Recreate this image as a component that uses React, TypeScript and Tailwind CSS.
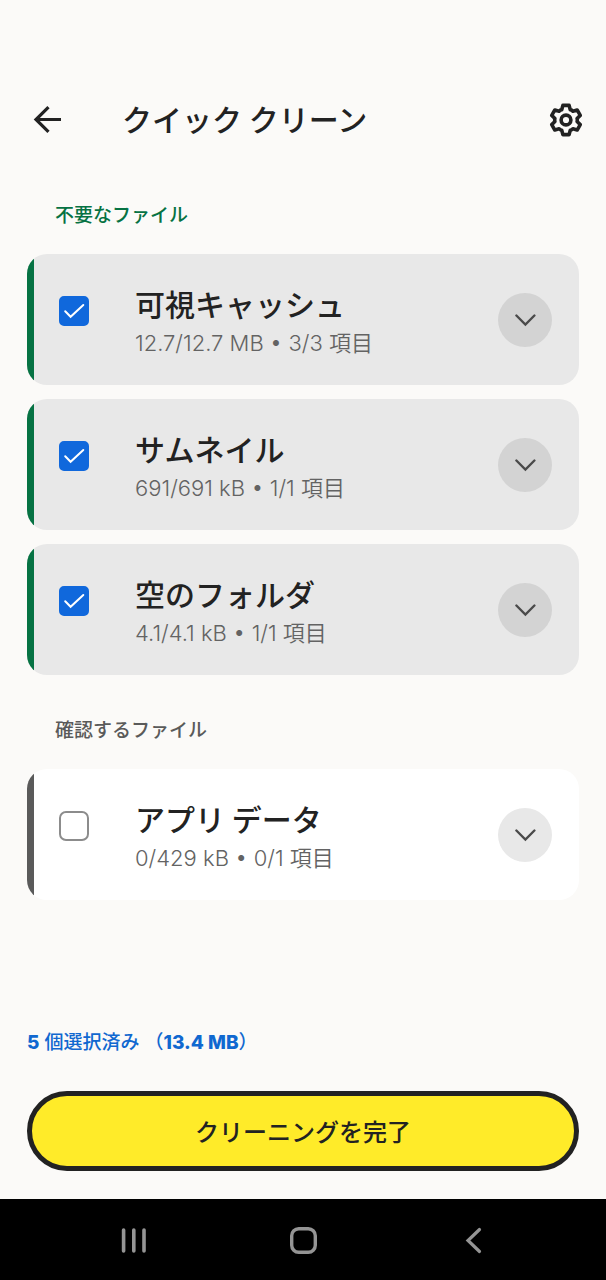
import { useState } from "react";

type Item = {
  id: string;
  title: string;
  detail: string;
  checked: boolean;
};

const junkFiles: Item[] = [
  { id: "cache", title: "可視キャッシュ", detail: "12.7/12.7 MB • 3/3 項目", checked: true },
  { id: "thumbs", title: "サムネイル", detail: "691/691 kB • 1/1 項目", checked: true },
  { id: "folders", title: "空のフォルダ", detail: "4.1/4.1 kB • 1/1 項目", checked: true },
];

const reviewFiles: Item[] = [
  { id: "appdata", title: "アプリ データ", detail: "0/429 kB • 0/1 項目", checked: false },
];

// Six-toothed outline around the origin.
function gearPath() {
  const point = (radius: number, degrees: number) => {
    const a = (degrees * Math.PI) / 180;
    return `${(radius * Math.cos(a)).toFixed(2)} ${(radius * Math.sin(a)).toFixed(2)}`;
  };
  const parts: string[] = [];
  for (let tooth = 0; tooth < 6; tooth++) {
    const t = tooth * 60 - 90;
    parts.push(
      `${tooth === 0 ? "M" : "L"}${point(11.2, t - 22)}`,
      `L${point(15, t - 12)}`,
      `L${point(15, t + 12)}`,
      `L${point(11.2, t + 22)}`,
      `Q${point(11.6, t + 30)} ${point(11.2, t + 38)}`,
    );
  }
  return parts.join("") + "Z";
}

function BackArrow() {
  return (
    <svg viewBox="0 0 28 28" className="size-7" fill="none" stroke="currentColor" strokeWidth="3.2" aria-hidden="true">
      <path d="M28 13.5H3M15.5 1.2L3 13.5L15.5 25.8" />
    </svg>
  );
}

function Gear() {
  return (
    <svg viewBox="-18 -18 36 36" className="size-9" fill="none" stroke="currentColor" strokeWidth="3.6" strokeLinejoin="round" aria-hidden="true">
      <path d={gearPath()} />
      <circle r="4.9" />
    </svg>
  );
}

function ItemCard({ item, review = false }: { item: Item; review?: boolean }) {
  const [checked, setChecked] = useState(item.checked);
  return (
    <li
      className={`flex items-stretch overflow-hidden rounded-[20px] ${review ? "bg-white" : "bg-[#e8e8e8]"}`}
    >
      <span className={`w-[7px] shrink-0 ${review ? "bg-[#5a5a5a]" : "bg-[#067243]"}`} />
      <label htmlFor={item.id} className="flex min-w-0 flex-1 items-start pl-[25px]">
        <span className="relative mt-[42px] block size-[30px] shrink-0">
          <input
            id={item.id}
            type="checkbox"
            checked={checked}
            onChange={() => setChecked(!checked)}
            className="block size-[30px] appearance-none rounded-[7px] border-2 border-[#8c8c8c] bg-white checked:rounded-[5px] checked:border-[#1068dc] checked:bg-[#1068dc]"
          />
          {checked && (
            <svg
              viewBox="0 0 30 30"
              className="pointer-events-none absolute inset-0 size-[30px]"
              fill="none"
              stroke="white"
              strokeWidth="2"
              strokeLinecap="round"
              aria-hidden="true"
            >
              <path d="M6.2 15.3L11.6 20.8L24.3 9" />
            </svg>
          )}
        </span>
        <span className="ml-[46px] block min-w-0 pt-7 pb-[23px]">
          <span className="block font-['Noto_Sans_CJK_JP',sans-serif] text-[30px] leading-[42px] font-medium text-[#222]">
            {item.title}
          </span>
          <span className="block text-[22px] leading-[38px] font-[350] text-[#636363]">{item.detail}</span>
        </span>
      </label>
      <button
        type="button"
        aria-label={`${item.title}を展開`}
        className={`mr-[27px] flex size-[54px] shrink-0 items-center justify-center self-center rounded-full text-[#4a4a4a] ${review ? "bg-[#e8e8e8]" : "bg-[#d3d3d3]"}`}
      >
        <svg viewBox="0 0 22 14" className="h-[14px] w-[22px]" fill="none" stroke="currentColor" strokeWidth="2.4" strokeLinecap="round" aria-hidden="true">
          <path d="M2.4 2.5L11.4 11.5L20.4 2.5" />
        </svg>
      </button>
    </li>
  );
}

export default function App() {
  return (
    <div
      lang="ja"
      className="flex min-h-screen flex-col bg-[#fbfaf8] font-['Inter','Noto_Sans_CJK_JP',sans-serif] text-[#222]"
    >
      <header className="mt-20 flex h-20 items-center pr-[22px] pl-[33px]">
        <button type="button" aria-label="戻る">
          <BackArrow />
        </button>
        <h1 className="ml-[61px] flex-1 pb-1 font-['Noto_Sans_CJK_JP',sans-serif] text-[30px] leading-10 font-medium">
          クイック クリーン
        </h1>
        <button type="button" aria-label="設定">
          <Gear />
        </button>
      </header>

      <main className="flex-1 px-[27px]">
        <section>
          <h2 className="mt-[42px] pl-7 text-[19px] leading-7 font-medium text-[#067243]">不要なファイル</h2>
          <ul className="mt-6 flex flex-col gap-[14px]">
            {junkFiles.map((item) => (
              <ItemCard key={item.id} item={item} />
            ))}
          </ul>
        </section>
        <section>
          <h2 className="mt-[42px] pl-7 text-[19px] leading-7 font-medium text-[#5a5a5a]">確認するファイル</h2>
          <ul className="mt-6 flex flex-col gap-[14px]">
            {reviewFiles.map((item) => (
              <ItemCard key={item.id} item={item} review />
            ))}
          </ul>
        </section>
      </main>

      <footer className="px-[27px] pb-7">
        <p className="text-[19px] leading-7 font-medium text-[#1068d0]">
          <b className="font-extrabold">5</b> 個選択済み （<b className="font-extrabold">13.4 MB</b>）
        </p>
        <button
          type="button"
          className="mt-[34px] h-20 w-full rounded-full border-5 border-[#222] bg-[#ffeb29] pt-1 text-2xl font-medium text-[#222]"
        >
          クリーニングを完了
        </button>
      </footer>

      <nav className="flex h-[81px] items-center bg-black px-12 text-[#949494]">
        <button type="button" aria-label="履歴" className="flex flex-1 justify-center">
          <svg viewBox="0 0 28 28" className="size-7" fill="none" stroke="currentColor" strokeWidth="3.6" strokeLinecap="round" aria-hidden="true">
            <path d="M4.6 4V25M14.8 4V25M25 4V25" />
          </svg>
        </button>
        <button type="button" aria-label="ホーム" className="flex flex-1 justify-center">
          <svg viewBox="0 0 28 28" className="size-7" fill="none" stroke="currentColor" strokeWidth="3.4" aria-hidden="true">
            <rect x="2.7" y="2.7" width="23.6" height="23.6" rx="7" />
          </svg>
        </button>
        <button type="button" aria-label="戻る" className="flex flex-1 justify-center">
          <svg viewBox="0 0 28 28" className="size-7" fill="none" stroke="currentColor" strokeWidth="3.2" strokeLinecap="round" aria-hidden="true">
            <path d="M20.5 3.5L9 14.5L20.5 25.5" />
          </svg>
        </button>
      </nav>
    </div>
  );
}
